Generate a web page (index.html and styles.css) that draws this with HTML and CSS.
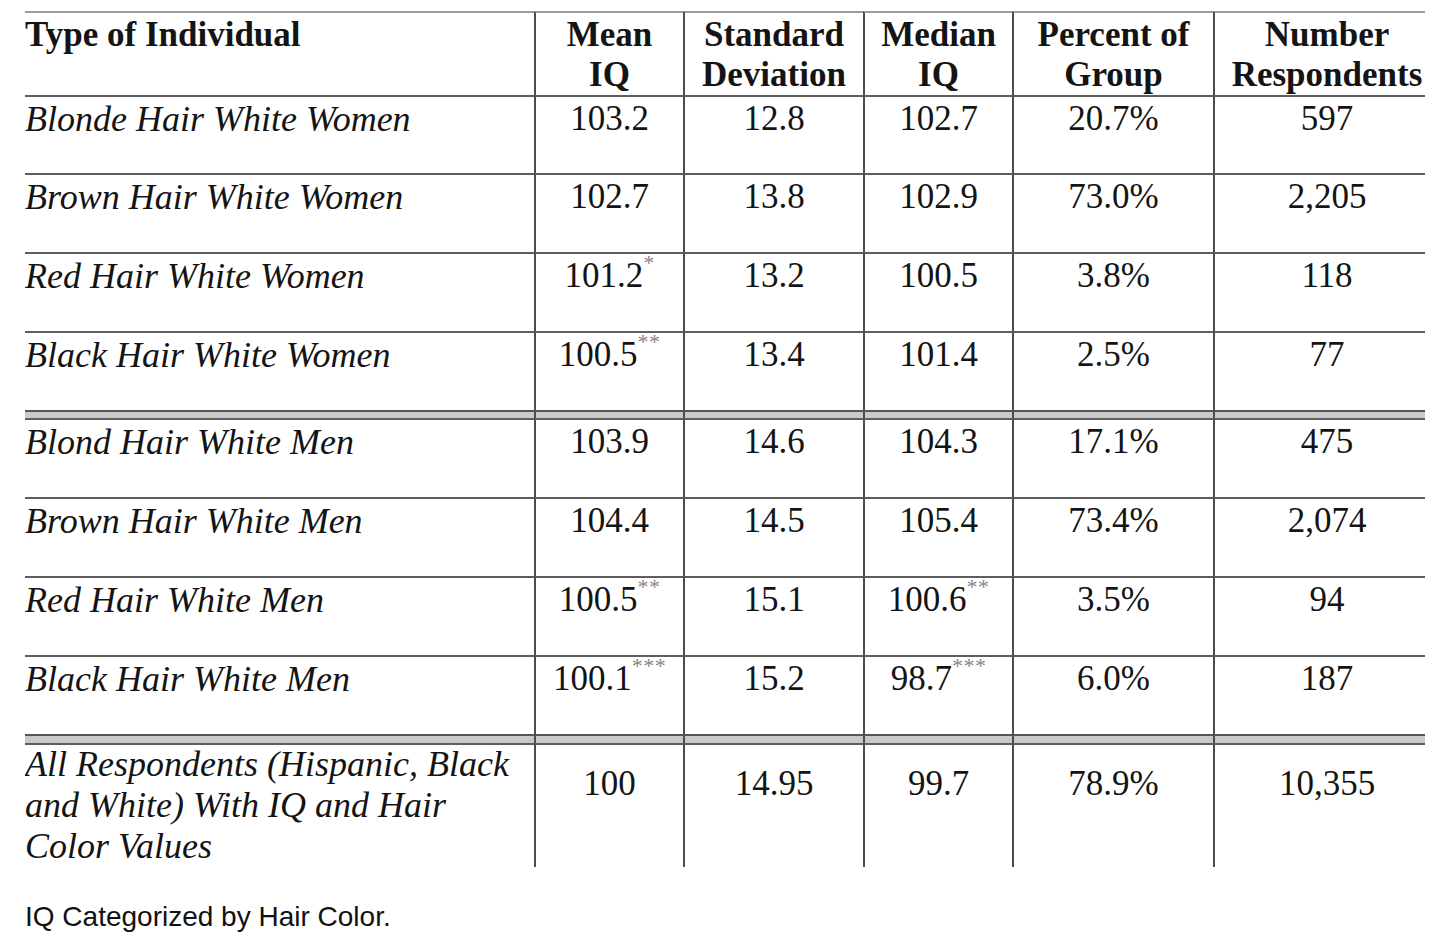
FILE: index.html
```html
<!DOCTYPE html>
<html lang="en">
<head>
<meta charset="utf-8">
<title>IQ Categorized by Hair Color</title>
<link rel="stylesheet" href="styles.css">
</head>
<body>
<main class="page">
  <div class="clip">
    <table class="iq">
      <colgroup>
        <col class="c-lbl">
        <col class="c-mean">
        <col class="c-sd">
        <col class="c-med">
        <col class="c-pct">
        <col class="c-num">
      </colgroup>
      <thead>
        <tr>
          <th class="lbl">Type of Individual</th>
          <th>Mean<br>IQ</th>
          <th>Standard<br>Deviation</th>
          <th>Median<br>IQ</th>
          <th>Percent of<br>Group</th>
          <th>Number<br>Respondents</th>
        </tr>
      </thead>
      <tbody>
        <tr class="first">
          <td class="lbl">Blonde Hair White Women</td>
          <td>103.2</td><td>12.8</td><td>102.7</td><td>20.7%</td><td>597</td>
        </tr>
        <tr>
          <td class="lbl">Brown Hair White Women</td>
          <td>102.7</td><td>13.8</td><td>102.9</td><td>73.0%</td><td>2,205</td>
        </tr>
        <tr>
          <td class="lbl">Red Hair White Women</td>
          <td>101.2<span class="ast">*</span></td><td>13.2</td><td>100.5</td><td>3.8%</td><td>118</td>
        </tr>
        <tr>
          <td class="lbl">Black Hair White Women</td>
          <td>100.5<span class="ast">**</span></td><td>13.4</td><td>101.4</td><td>2.5%</td><td>77</td>
        </tr>
        <tr class="sep">
          <td></td><td></td><td></td><td></td><td></td><td></td>
        </tr>
        <tr>
          <td class="lbl">Blond Hair White Men</td>
          <td>103.9</td><td>14.6</td><td>104.3</td><td>17.1%</td><td>475</td>
        </tr>
        <tr>
          <td class="lbl">Brown Hair White Men</td>
          <td>104.4</td><td>14.5</td><td>105.4</td><td>73.4%</td><td>2,074</td>
        </tr>
        <tr>
          <td class="lbl">Red Hair White Men</td>
          <td>100.5<span class="ast">**</span></td><td>15.1</td><td>100.6<span class="ast">**</span></td><td>3.5%</td><td>94</td>
        </tr>
        <tr>
          <td class="lbl">Black Hair White Men</td>
          <td>100.1<span class="ast">***</span></td><td>15.2</td><td>98.7<span class="ast">***</span></td><td>6.0%</td><td>187</td>
        </tr>
        <tr class="sep sep-wide">
          <td></td><td></td><td></td><td></td><td></td><td></td>
        </tr>
        <tr class="total">
          <td class="lbl"><div class="lbl-text">All Respondents (Hispanic, Black and White) With IQ and Hair Color Values</div></td>
          <td>100</td><td>14.95</td><td>99.7</td><td>78.9%</td><td>10,355</td>
        </tr>
      </tbody>
    </table>
  </div>
  <p class="caption">IQ Categorized by Hair Color.</p>
</main>
</body>
</html>
```

FILE: styles.css
```css
html, body {
  margin: 0;
  padding: 0;
  background: #ffffff;
}

.page {
  padding: 11px 0 0 25px;
}

.clip {
  width: 1400px;
  overflow: hidden;
}

.iq {
  border-collapse: separate;
  border-spacing: 0;
  table-layout: fixed;
  width: 1414px;
  font-family: "Liberation Serif", "Times New Roman", serif;
  font-size: 35px;
  line-height: 40px;
  color: #141414;
}

.c-lbl { width: 509px; }
.c-mean { width: 149px; }
.c-sd { width: 180px; }
.c-med { width: 149px; }
.c-pct { width: 201px; }
.c-num { width: 226px; }

.iq th,
.iq td {
  padding: 0;
  vertical-align: top;
  text-align: center;
  border-left: 2px solid #4c4c4c;
  white-space: nowrap;
}

.iq th.lbl,
.iq td.lbl,
.iq .sep td:first-child {
  border-left: none;
  text-align: left;
}

.iq th {
  font-weight: bold;
  border-top: 2px solid #9c9c9c;
  padding-top: 2px;
}

.iq td {
  border-top: 2px solid #5e5e5e;
  padding-top: 2px;
  padding-bottom: 35px;
}

.iq td.lbl {
  font-style: italic;
  font-size: 36px;
}

.iq tr.first td {
  padding-bottom: 34px;
}

.iq .sep td {
  padding: 0;
  height: 6px;
  background: #c9c9c9;
  border-top: 2px solid #565656;
  font-size: 0;
  line-height: 0;
}

.iq .sep-wide td {
  height: 7px;
}

.ast {
  font-size: 22px;
  line-height: 0;
  color: #858585;
  vertical-align: 17px;
  font-style: normal;
  letter-spacing: 0.5px;
}

.iq .total td {
  padding-top: 19px;
  padding-bottom: 0;
  height: 101px;
}

.iq .total td.lbl {
  padding-top: 0;
  white-space: normal;
}

.lbl-text {
  width: 500px;
  line-height: 41px;
  margin-top: -1px;
}

.caption {
  margin: 34px 0 0 0;
  font-family: "Liberation Sans", Arial, sans-serif;
  font-size: 28px;
  line-height: 32px;
  color: #111111;
}
```
